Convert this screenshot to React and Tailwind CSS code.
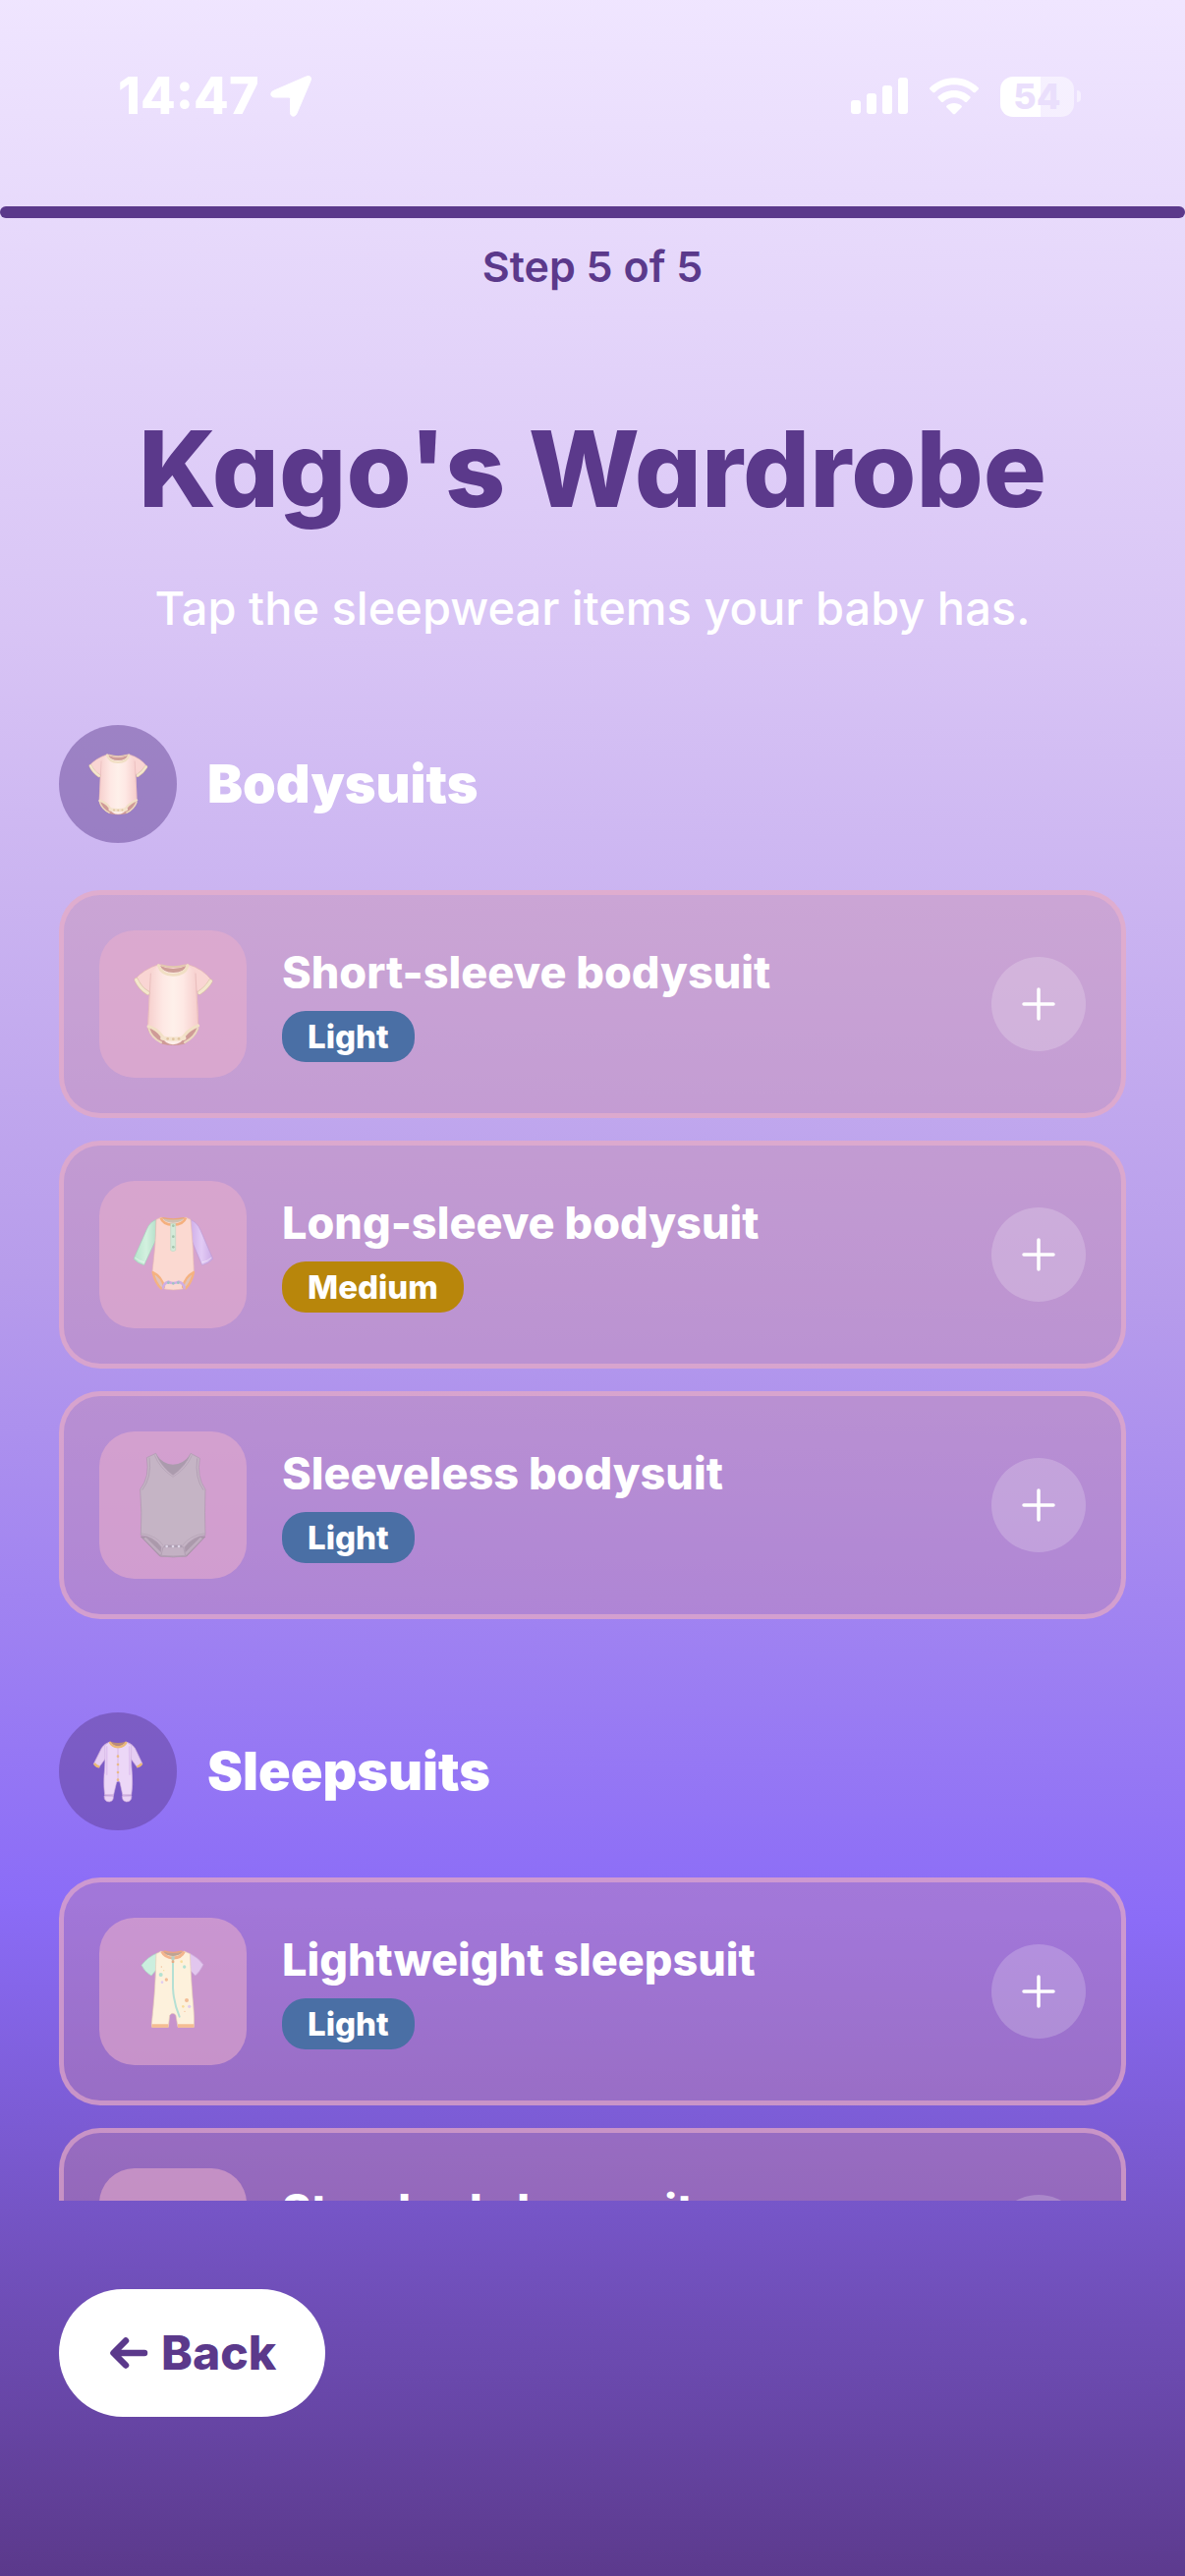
import React from "react";

const WARDROBE = [
  {
    title: "Bodysuits",
    icon: "shortBodysuit",
    items: [
      { name: "Short-sleeve bodysuit", warmth: "Light", icon: "shortBodysuit" },
      { name: "Long-sleeve bodysuit", warmth: "Medium", icon: "longBodysuit" },
      { name: "Sleeveless bodysuit", warmth: "Light", icon: "sleeveless" },
    ],
  },
  {
    title: "Sleepsuits",
    icon: "sleepsuit",
    items: [
      { name: "Lightweight sleepsuit", warmth: "Light", icon: "lightSleepsuit" },
      { name: "Standard sleepsuit", warmth: "Medium", icon: "sleepsuit" },
    ],
  },
];

const WARMTH_COLORS = {
  Light: "bg-[#4a6fa5]",
  Medium: "bg-[#b8860b]",
};

/* Garment drawings */

const ShortBodysuit = ({ className }) => (
  <svg viewBox="33 -9 450 450" className={className} aria-hidden="true">
    <defs>
      <linearGradient id="sbBody" x1="0" x2="1" y1="0" y2="0">
        <stop offset="0" stopColor="#f6cfcd" />
        <stop offset="0.3" stopColor="#fee8e4" />
        <stop offset="0.5" stopColor="#fef0ea" />
        <stop offset="0.7" stopColor="#fee8e4" />
        <stop offset="1" stopColor="#f5cccb" />
      </linearGradient>
    </defs>
    <path d="M184 284 L181 292 Q188 318 226 338 Q258 346 292 338 Q328 318 336 292 L333 278Z" fill="#cf9b97" />
    <path d="M216 94 Q168 110 142 140 Q156 172 180 188 L192 166 L324 166 L339 187 Q364 170 377 144 Q350 108 302 94 Q258 112 216 94Z" fill="#f9d5d3" stroke="#dfb1b2" strokeWidth="2" />
    <path d="M190 116 Q184 200 181 280 Q206 288 226 318 Q234 338 258 340 Q284 338 292 318 Q310 290 336 278 Q334 190 327 116 L302 98 Q258 138 214 98Z" fill="url(#sbBody)" />
    <path d="M190 122 L182 278 M327 122 L335 276" fill="none" stroke="#e2b3b4" strokeWidth="2" />
    <path d="M218 98 Q258 118 300 98 Q294 118 259 120 Q226 118 218 98Z" fill="#cf9f99" />
    <path d="M214 98 Q222 126 258 127 Q296 126 303 98" fill="none" stroke="#f1dfc4" strokeWidth="9" strokeLinecap="round" />
    <path d="M222 97 Q258 108 296 97" fill="none" stroke="#e2c8ae" strokeWidth="5" />
    <path d="M146 142 Q158 168 181 182 M373 146 Q360 168 339 181" fill="none" stroke="#d9bfa4" strokeWidth="13" strokeLinecap="round" />
    <path d="M146 142 Q158 168 181 182 M373 146 Q360 168 339 181" fill="none" stroke="#f4e6cd" strokeWidth="10" strokeLinecap="round" />
    <path d="M183 284 Q208 290 224 313 L232 322 M335 282 Q308 292 292 313 L284 322" fill="none" stroke="#f2e0c6" strokeWidth="9" strokeLinecap="round" />
    <path d="M184 290 Q192 318 222 333 M334 290 Q324 318 294 333" fill="none" stroke="#ecd8c0" strokeWidth="6" strokeLinecap="round" />
    <path d="M226 320 Q258 326 292 320" fill="none" stroke="#f4e3cc" strokeWidth="13" strokeLinecap="round" />
    <g fill="#e0c6a2">
      <circle cx="242" cy="322" r="4" />
      <circle cx="259" cy="323" r="4" />
      <circle cx="276" cy="322" r="4" />
    </g>
  </svg>
);

const LongBodysuit = ({ className }) => (
  <svg viewBox="33 6 450 450" className={className} aria-hidden="true">
    <defs>
      <linearGradient id="lbMint" x1="0" x2="1" y1="0" y2="0">
        <stop offset="0" stopColor="#b5e4cc" />
        <stop offset="0.55" stopColor="#d3f1df" />
        <stop offset="1" stopColor="#b4dfc9" />
      </linearGradient>
      <linearGradient id="lbLilac" x1="0" x2="1" y1="0" y2="0">
        <stop offset="0" stopColor="#cfaee8" />
        <stop offset="0.5" stopColor="#e2cbf5" />
        <stop offset="1" stopColor="#cbaae6" />
      </linearGradient>
    </defs>
    <path d="M208 124 Q188 130 178 154 L138 244 Q150 258 170 263 L206 186Z" fill="url(#lbMint)" stroke="#a3ccb9" strokeWidth="2" />
    <path d="M311 124 Q332 132 342 156 L380 244 Q368 258 347 263 L316 190Z" fill="url(#lbLilac)" stroke="#bd9cd6" strokeWidth="2" />
    <path d="M142 240 Q156 252 172 255 M376 240 Q364 252 346 255" fill="none" stroke="#ffffff" strokeOpacity="0.5" strokeWidth="3" />
    <path d="M198 288 Q206 318 222 332 L296 332 Q316 314 321 288Z" fill="#e0b4ae" />
    <path d="M207 124 L222 117 Q258 142 297 117 L312 124 Q320 200 322 284 Q296 296 288 336 Q258 342 232 336 Q224 296 195 284 Q206 200 207 124Z" fill="#fbd9d1" stroke="#e8bbb4" strokeWidth="2" />
    <path d="M226 118 Q258 128 292 118 Q286 134 258 134 Q232 134 226 118Z" fill="#cfc2b4" />
    <path d="M221 119 Q228 140 258 140 Q290 140 297 119" fill="none" stroke="#f4b07e" strokeWidth="8" />
    <path d="M226 119 Q258 126 292 119" fill="none" stroke="#eba777" strokeWidth="4" />
    <path d="M251 136 H266 V218 Q258 224 251 218Z" fill="#d3ead8" stroke="#b9d4c0" strokeWidth="1.5" />
    <g fill="#a4c5ad">
      <circle cx="259" cy="143" r="4" />
      <circle cx="259" cy="176" r="4" />
      <circle cx="259" cy="208" r="4" />
    </g>
    <path d="M197 285 Q224 298 231 330 L222 334 Q204 318 197 285ZM321 285 Q296 298 288 330 L297 334 Q315 316 321 285Z" fill="#e2c3bb" stroke="#f5b281" strokeWidth="7" strokeLinejoin="round" />
    <path d="M228 332 Q230 318 244 314 Q259 322 276 314 Q290 318 293 332" fill="none" stroke="#cfaee4" strokeWidth="8" strokeLinecap="round" />
    <g fill="#9fc4c4">
      <circle cx="244" cy="317" r="4" />
      <circle cx="259" cy="319" r="4" />
      <circle cx="274" cy="317" r="4" />
    </g>
  </svg>
);

const Sleeveless = ({ className }) => (
  <svg viewBox="33 21 450 450" className={className} aria-hidden="true">
    <path d="M160 342 L218 402 Q258 407 300 402 L357 342Z" fill="#ab99ab" stroke="#a48fa5" strokeWidth="2" strokeLinejoin="round" />
    <path d="M206 90 Q228 122 258 122 Q290 122 312 90 L300 130 L258 160 L216 130Z" fill="#ab9bad" />
    <path d="M206 88 L178 101 Q188 160 158 198 Q164 270 160 338 Q200 342 222 374 L220 402 Q258 406 298 402 L294 374 Q318 342 357 338 Q354 270 357 198 Q330 160 340 103 L312 88 Q296 128 258 154 Q222 128 206 88Z" fill="#c5b4c5" stroke="#ac99ae" strokeWidth="2" strokeLinejoin="round" />
    <path d="M202 94 Q218 134 258 160 Q300 134 316 94" fill="none" stroke="#b2a0b4" strokeWidth="2" />
    <path d="M186 101 Q194 162 164 200 M332 103 Q324 162 351 200" fill="none" stroke="#b4a1b5" strokeWidth="3" />
    <path d="M160 332 Q208 338 229 370 M357 332 Q308 338 287 370" fill="none" stroke="#b3a1b4" strokeWidth="2" />
    <path d="M172 346 L222 396 M345 346 L296 396" fill="none" stroke="#bfadbf" strokeWidth="8" />
    <path d="M228 374 H290 L296 400 Q258 404 222 400Z" fill="#c3b1c3" stroke="#aa98ac" strokeWidth="2" />
    <path d="M232 371 H286" stroke="#ac9cb0" strokeWidth="6" />
    <g fill="#ded5e6">
      <circle cx="239" cy="372" r="4" />
      <circle cx="258" cy="372" r="4" />
      <circle cx="276" cy="372" r="4" />
    </g>
  </svg>
);

const Sleepsuit = ({ className }) => (
  <svg viewBox="0 9 360 360" className={className} aria-hidden="true">
    <path d="M154 100 Q134 106 126 126 L106 166 Q112 175 122 177 L142 150ZM207 100 Q228 106 236 126 L255 166 Q248 175 239 177 L219 150Z" fill="#e6cdf3" stroke="#c7a4d8" strokeWidth="2" />
    <path d="M108 165 Q114 174 124 175 M253 165 Q247 174 238 175" fill="none" stroke="#eab873" strokeWidth="7" />
    <path d="M138 264 H166 Q168 280 154 282 Q138 282 138 264ZM193 264 H222 Q222 282 206 282 Q192 280 193 264Z" fill="#ead3f5" stroke="#c4a2d6" strokeWidth="2" />
    <path d="M154 99 L140 110 Q142 170 138 200 Q136 236 140 262 L166 264 L176 222 Q181 216 186 222 L195 264 L221 262 Q226 230 223 196 Q219 160 221 110 L206 99 Q180 126 154 99Z" fill="#ecd7f7" stroke="#ceafe0" strokeWidth="2" />
    <path d="M146 112 L146 200 M215 112 L216 200" fill="none" stroke="#dfc2ef" strokeWidth="5" />
    <path d="M158 98 Q180 106 203 98 Q198 110 180 111 Q164 110 158 98Z" fill="#b98b78" />
    <path d="M155 99 Q162 114 180 115 Q200 114 206 99" fill="none" stroke="#ebb976" strokeWidth="7" />
    <path d="M180 118 V222" stroke="#cfaedd" strokeWidth="2" />
    <path d="M140 261 H166 M195 261 H222" stroke="#c6a3d5" strokeWidth="3" />
    <g fill="#e9bb88">
      <circle cx="180" cy="143" r="4" />
      <circle cx="180" cy="168" r="4" />
      <circle cx="180" cy="192" r="4" />
      <circle cx="180" cy="215" r="4" />
    </g>
  </svg>
);

const LightSleepsuit = ({ className }) => (
  <svg viewBox="123 636 450 450" className={className} aria-hidden="true">
    <path d="M300 744 Q270 756 252 781 Q262 802 282 813 L298 794Z" fill="#cbeede" stroke="#a9d5c4" strokeWidth="2" />
    <path d="M398 744 Q424 756 441 779 Q430 802 416 813 L400 796Z" fill="#e2c6ee" stroke="#c7a5d6" strokeWidth="2" />
    <path d="M312 738 L297 746 Q296 850 283 960 L284 970 H334 L338 934 Q347 922 357 934 L363 970 H412 Q414 940 408 880 Q402 800 400 746 L382 738 Q348 766 312 738Z" fill="#fdf1dc" stroke="#e7cfb6" strokeWidth="2" />
    <path d="M318 738 Q348 750 378 738 Q372 752 348 753 Q324 752 318 738Z" fill="#bfa493" />
    <path d="M314 739 Q324 758 348 759 Q374 758 382 739" fill="none" stroke="#f3b48c" strokeWidth="9" />
    <path d="M320 738 Q348 746 376 738" fill="none" stroke="#e9a67e" strokeWidth="4" />
    <path d="M284 966 H334 M363 966 H412" stroke="#f5bd93" strokeWidth="10" />
    <path d="M348 764 V850 Q350 896 368 938" fill="none" stroke="#b5e0d4" strokeWidth="6" strokeLinecap="round" />
    <rect x="343" y="754" width="10" height="10" rx="2" fill="#b7cfc4" />
    <rect x="344" y="766" width="8" height="8" rx="2" fill="#e3ad88" />
    <g fill="#b3e2d2">
      <circle cx="311" cy="810" r="6" />
      <circle cx="383" cy="786" r="5" />
    </g>
    <g fill="#f3bd96">
      <circle cx="328" cy="825" r="5" />
      <circle cx="390" cy="888" r="6" />
      <circle cx="384" cy="922" r="2" />
      <circle cx="313" cy="786" r="2" />
    </g>
    <g fill="#f8dd9c">
      <circle cx="374" cy="770" r="4" />
      <circle cx="379" cy="907" r="4" />
      <circle cx="320" cy="797" r="2" />
    </g>
    <g fill="#e2cdf0">
      <circle cx="315" cy="833" r="4" />
      <circle cx="398" cy="907" r="5" />
    </g>
  </svg>
);

const GARMENTS = {
  shortBodysuit: ShortBodysuit,
  longBodysuit: LongBodysuit,
  sleeveless: Sleeveless,
  sleepsuit: Sleepsuit,
  lightSleepsuit: LightSleepsuit,
};

const StatusBar = () => (
  <div className="flex items-center justify-between pt-[68px] pb-[82px] pl-[120px] pr-[106px] text-white">
    <div className="flex items-center gap-3">
      <span className="text-[52px] leading-[60px] font-extrabold">14:47</span>
      <svg viewBox="0 0 42 42" className="w-[42px] h-[42px]" aria-hidden="true">
        <path d="M36.500 1 C40.500 -.5 42.500 1.500 41 5.500 L27 38.500 C25.500 42.500 20.500 42 20.500 37.500 V23.500 Q20.500 22 19 22 H4.500 C0 22 -.5 17 3.500 15.300Z" fill="currentColor" stroke="currentColor" strokeWidth="1" />
      </svg>
    </div>

    <div className="flex items-center">
      <svg viewBox="0 0 58 38" className="w-[58px] h-[38px]" fill="currentColor" aria-hidden="true">
        <rect x="0" y="23" width="10" height="14" rx="3" />
        <rect x="16" y="16" width="10" height="21" rx="3" />
        <rect x="32" y="8" width="10" height="29" rx="3" />
        <rect x="48" y="0" width="10" height="37" rx="3" />
      </svg>
      <svg viewBox="0 0 150 112" className="w-[50px] h-[38px] ml-[22px]" fill="currentColor" aria-hidden="true">
        <path d="M75 0 C105 0 130 12 149 30 Q151 33 149 35 L140 44 Q137 46 134 44 C118 29 98 21 75 21 C52 21 32 29 16 44 Q13 46 10 44 L1 35 Q-1 33 1 30 C20 12 45 0 75 0Z" />
        <path d="M75 38 C94 38 111 45 124 57 Q126 60 124 62 L114 73 Q111 75 108 73 C99 65 88 60 75 60 C62 60 51 65 42 73 Q39 75 36 73 L26 62 Q24 60 26 57 C39 45 56 38 75 38Z" />
        <path d="M75 77 C84 77 92 80 98 85 Q100 88 98 90 L78 110 Q75 112 72 110 L52 90 Q50 88 52 85 C58 80 66 77 75 77Z" />
      </svg>
      <div className="ml-[22px] flex h-[41px] w-[75px] items-center justify-center rounded-[13px] bg-[linear-gradient(90deg,#fff_55%,rgba(255,255,255,0.5)_55%)] text-[36px] leading-[41px] font-extrabold text-[#eadffc]">
        54
      </div>
      <div className="ml-[3px] h-3 w-1 rounded-r-full bg-white/50" />
    </div>
  </div>
);

const WardrobeItem = ({ item }) => {
  const Garment = GARMENTS[item.icon];

  return (
    <li className="flex items-center gap-9 rounded-[42px] border-[5px] border-[rgba(239,179,202,0.56)] bg-[rgba(203,138,163,0.36)] p-9">
      <div className="shrink-0 rounded-[36px] bg-[rgba(234,174,203,0.56)]">
        <Garment className="h-[150px] w-[150px]" />
      </div>
      <div className="flex flex-1 flex-col items-start gap-3">
        <h3 className="text-[45px] leading-[54px] font-extrabold">{item.name}</h3>
        <span
          className={`rounded-3xl px-[26px] text-[33px] leading-[52px] font-extrabold ${WARMTH_COLORS[item.warmth]}`}
        >
          {item.warmth}
        </span>
      </div>
      <button
        type="button"
        aria-label={`Add ${item.name}`}
        className="flex h-24 w-24 shrink-0 items-center justify-center rounded-full bg-white/20"
      >
        <svg viewBox="0 0 34 34" className="h-[34px] w-[34px]" aria-hidden="true">
          <path d="M17 2 V32 M2 17 H32" stroke="currentColor" strokeWidth="3.500" strokeLinecap="round" />
        </svg>
      </button>
    </li>
  );
};

const WardrobeSection = ({ section }) => {
  const Garment = GARMENTS[section.icon];

  return (
    <section>
      <div className="mb-12 flex items-center gap-[31px]">
        <div className="flex h-[120px] w-[120px] items-center justify-center rounded-full bg-[#5b398b]/45">
          <Garment
            className={section.icon === "sleepsuit" ? "h-[120px] w-[120px]" : "h-28 w-28"}
          />
        </div>
        <h2 className="text-[54px] leading-[64px] font-black">{section.title}</h2>
      </div>
      <ul className="flex flex-col gap-[23px]">
        {section.items.map((item) => (
          <WardrobeItem key={item.name} item={item} />
        ))}
      </ul>
    </section>
  );
};

export default function App() {
  return (
    <div className="flex h-screen flex-col overflow-hidden bg-[linear-gradient(181deg,#f0e6ff_0%,#d8c4f5_25%,#b79ceb_50%,#8b6cf7_74%,#5b398b_100%)] font-['Inter',sans-serif] text-white">
      <StatusBar />

      {/* Progress */}
      <div className="h-3 shrink-0 rounded-full bg-[#5b398b]" />
      <p className="mt-6 text-center text-[43px] leading-[50px] font-semibold text-[#5b398b]">
        Step 5 of 5
      </p>

      {/* Wardrobe list */}
      <main className="min-h-0 flex-1 overflow-hidden px-[60px] pt-[116px]">
        <h1 className="text-center text-[107px] leading-[130px] font-extrabold text-[#5b398b] [font-feature-settings:'cv11']">
          Kago's Wardrobe
        </h1>
        <p className="mt-11 mb-[86px] text-center text-[47px] leading-[66px] font-medium">
          Tap the sleepwear items your baby has.
        </p>
        <div className="flex flex-col gap-[95px]">
          {WARDROBE.map((section) => (
            <WardrobeSection key={section.title} section={section} />
          ))}
        </div>
      </main>

      {/* Footer */}
      <footer className="px-[60px] pt-[90px] pb-[162px]">
        <button
          type="button"
          className="flex h-[130px] items-center gap-3 rounded-full bg-white px-[50px] text-[48px] font-extrabold text-[#5b398b]"
        >
          <svg viewBox="0 0 42 42" className="h-[42px] w-[42px]" aria-hidden="true">
            <path d="M18 8.500 L5.500 21 L18 33.500 M7 21 H37" fill="none" stroke="currentColor" strokeWidth="6.500" strokeLinecap="round" strokeLinejoin="round" />
          </svg>
          Back
        </button>
      </footer>
    </div>
  );
}
